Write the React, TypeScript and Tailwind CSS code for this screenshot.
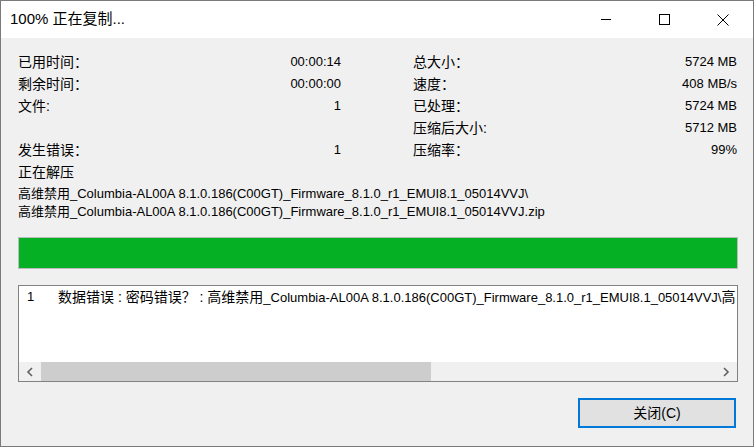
import React from "react";

const font = { fontFamily: '"Liberation Sans", "Noto Sans CJK SC", sans-serif' };

const leftRows = [
  { label: "已用时间：", value: "00:00:14" },
  { label: "剩余时间：", value: "00:00:00" },
  { label: "文件:", value: "1" },
  { label: "", value: "" },
  { label: "发生错误：", value: "1" },
];

const rightRows = [
  { label: "总大小：", value: "5724 MB" },
  { label: "速度：", value: "408 MB/s" },
  { label: "已处理：", value: "5724 MB" },
  { label: "压缩后大小:", value: "5712 MB" },
  { label: "压缩率：", value: "99%" },
];

const Row = ({ label, value }: { label: string; value: string }) => (
  <div className="flex h-[22px] items-center justify-between">
    <span className="text-[14px]">{label}</span>
    <span>{value}</span>
  </div>
);

export default function App() {
  return (
    <div
      className="w-[754px] h-[447px] border border-[#7a7a7a] bg-[#f0f0f0] flex flex-col text-[13px] text-black overflow-hidden"
      style={font}
    >
      {/* titlebar */}
      <div className="h-[37px] bg-white flex items-center shrink-0">
        <span className="pl-[9px] text-[15px] flex-1">100% 正在复制...</span>
        <div className="flex h-full">
          <div className="w-[58px] flex items-center justify-center">
            <svg width="11" height="11" viewBox="0 0 11 11">
              <path d="M0 5.5h10" stroke="#000" strokeWidth="1" />
            </svg>
          </div>
          <div className="w-[58px] flex items-center justify-center">
            <svg width="11" height="11" viewBox="0 0 11 11">
              <rect x="0.5" y="0.5" width="10" height="10" fill="none" stroke="#000" strokeWidth="1" />
            </svg>
          </div>
          <div className="w-[60px] flex items-center justify-center">
            <svg width="12" height="12" viewBox="0 0 12 12">
              <path d="M0.5 0.5L11.5 11.5M11.5 0.5L0.5 11.5" stroke="#000" strokeWidth="1" />
            </svg>
          </div>
        </div>
      </div>

      <div className="flex-1 flex flex-col px-[16px] pt-[13px]">
        <div className="flex">
          <div className="w-[324px] pl-[1px]">
            {leftRows.map((r, i) => (
              <Row key={i} label={r.label} value={r.value} />
            ))}
          </div>
          <div className="w-[324px] ml-[72px]">
            {rightRows.map((r, i) => (
              <Row key={i} label={r.label} value={r.value} />
            ))}
          </div>
        </div>
        <div className="h-[22px] flex items-center pl-[1px] text-[14px]">正在解压</div>
        <div className="pl-[1px] leading-[18px] mt-[2px]">
          <div>高维禁用_Columbia-AL00A 8.1.0.186(C00GT)_Firmware_8.1.0_r1_EMUI8.1_05014VVJ\</div>
          <div>高维禁用_Columbia-AL00A 8.1.0.186(C00GT)_Firmware_8.1.0_r1_EMUI8.1_05014VVJ.zip</div>
        </div>

        <div className="mt-[16px] h-[32px] border border-[#bcbcbc] bg-[#e6e6e6] w-[720px] ml-[1px]">
          <div className="h-full w-full bg-[#06b025]" />
        </div>

        <div className="mt-[16px] h-[97px] w-[720px] ml-[1px] border border-[#828282] bg-white flex flex-col">
          <div className="flex-1 overflow-hidden">
            <div className="flex h-[22px] items-center whitespace-nowrap">
              <span className="w-[39px] pl-[8px] shrink-0">1</span>
              <span>
                <span className="text-[14px]">数据错误 : 密码错误？ : 高维禁用</span>
                _Columbia-AL00A 8.1.0.186(C00GT)_Firmware_8.1.0_r1_EMUI8.1_05014VVJ\
                <span className="text-[14px]">高</span>
              </span>
            </div>
          </div>
          <div className="h-[19px] bg-[#f0f0f0] flex items-center shrink-0">
            <div className="w-[22px] h-full flex items-center justify-center">
              <svg width="8" height="10" viewBox="0 0 8 10">
                <path d="M6 1L2 5L6 9" fill="none" stroke="#606060" strokeWidth="1.6" />
              </svg>
            </div>
            <div className="w-[390px] h-full bg-[#cdcdcd]" />
            <div className="flex-1" />
            <div className="w-[22px] h-full flex items-center justify-center">
              <svg width="8" height="10" viewBox="0 0 8 10">
                <path d="M2 1L6 5L2 9" fill="none" stroke="#606060" strokeWidth="1.6" />
              </svg>
            </div>
          </div>
        </div>

        <div className="flex justify-end mt-[16px] pr-[1px]">
          <button className="w-[158px] h-[30px] border-2 border-[#0078d7] bg-[#e1e1e1] text-[14px]">
            关闭(C)
          </button>
        </div>
      </div>
    </div>
  );
}
